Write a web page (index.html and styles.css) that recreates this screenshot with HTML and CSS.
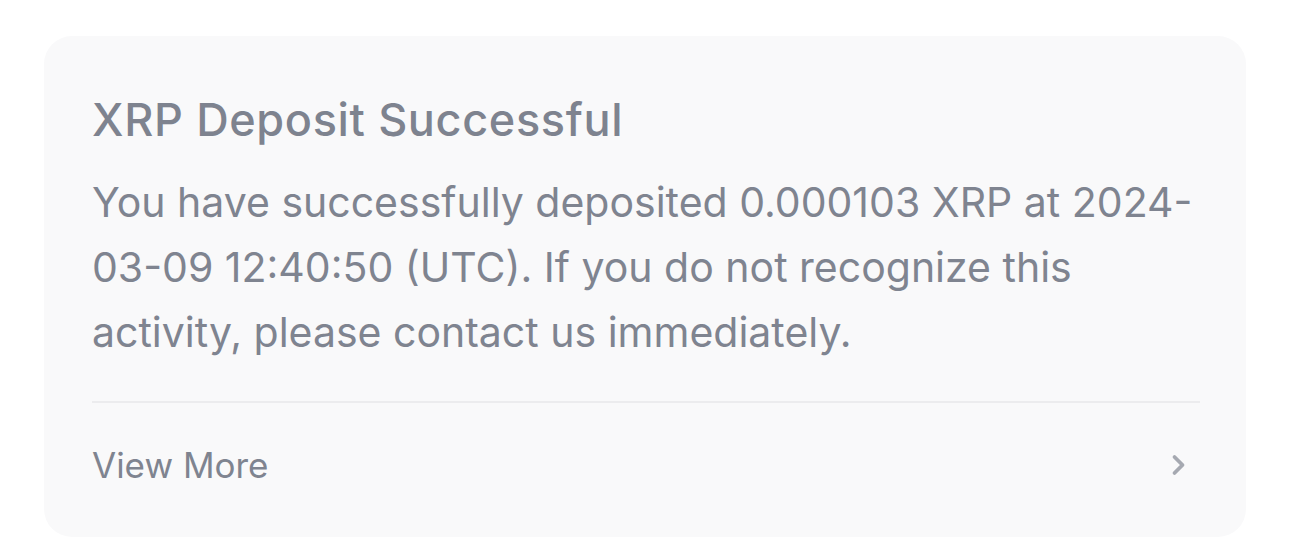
FILE: index.html
```html
<!DOCTYPE html>
<html lang="en">
<head>
<meta charset="utf-8">
<link rel="stylesheet" href="styles.css">
</head>
<body>
<div class="page">
  <div class="card">
    <h1 class="title">XRP Deposit Successful</h1>
    <p class="body">You have successfully deposited 0.000103 XRP at 2024-<wbr>03-09 12:40:50 (UTC). If you do not recognize this activity, please contact us immediately.</p>
    <div class="divider"></div>
    <div class="more">
      <span class="more-text">View More</span>
      <svg class="chev" width="16" height="24" viewBox="0 0 16 24"><path d="M3.5 4 L11.5 12 L3.5 20" fill="none" stroke="#a6a9b1" stroke-width="3.8" stroke-linecap="round" stroke-linejoin="round"/></svg>
    </div>
  </div>
</div>
</body>
</html>
```
FILE: styles.css
```css
html, body {
  margin: 0;
  padding: 0;
  background: #ffffff;
}
body {
  font-family: Inter, "Noto Sans", sans-serif;
  color: #7f8490;
}
.page {
  padding: 36px 44px 0 44px;
}
.card {
  background: #f9f9fa;
  border-radius: 28px;
  padding: 56px 46px 42px 48px;
  height: 501px;
  box-sizing: border-box;
  display: flex;
  flex-direction: column;
}
.title {
  margin: 0;
  font-size: 45px;
  font-weight: 500;
  line-height: 56px;
  letter-spacing: 0.65px;
  color: #7e838f;
}
.body {
  margin: 22px 0 0 0;
  font-size: 41px;
  font-weight: 400;
  line-height: 65px;
  letter-spacing: 0;
  color: #7f8490;
}
.divider {
  margin-top: 36px;
  height: 2px;
  background: #ececee;
}
.more {
  display: flex;
  align-items: center;
  justify-content: space-between;
  height: 60px;
  margin-top: 33px;
}
.more-text {
  font-size: 35px;
  color: #7f8490;
}
.chev {
  margin-right: 13px;
}
```
